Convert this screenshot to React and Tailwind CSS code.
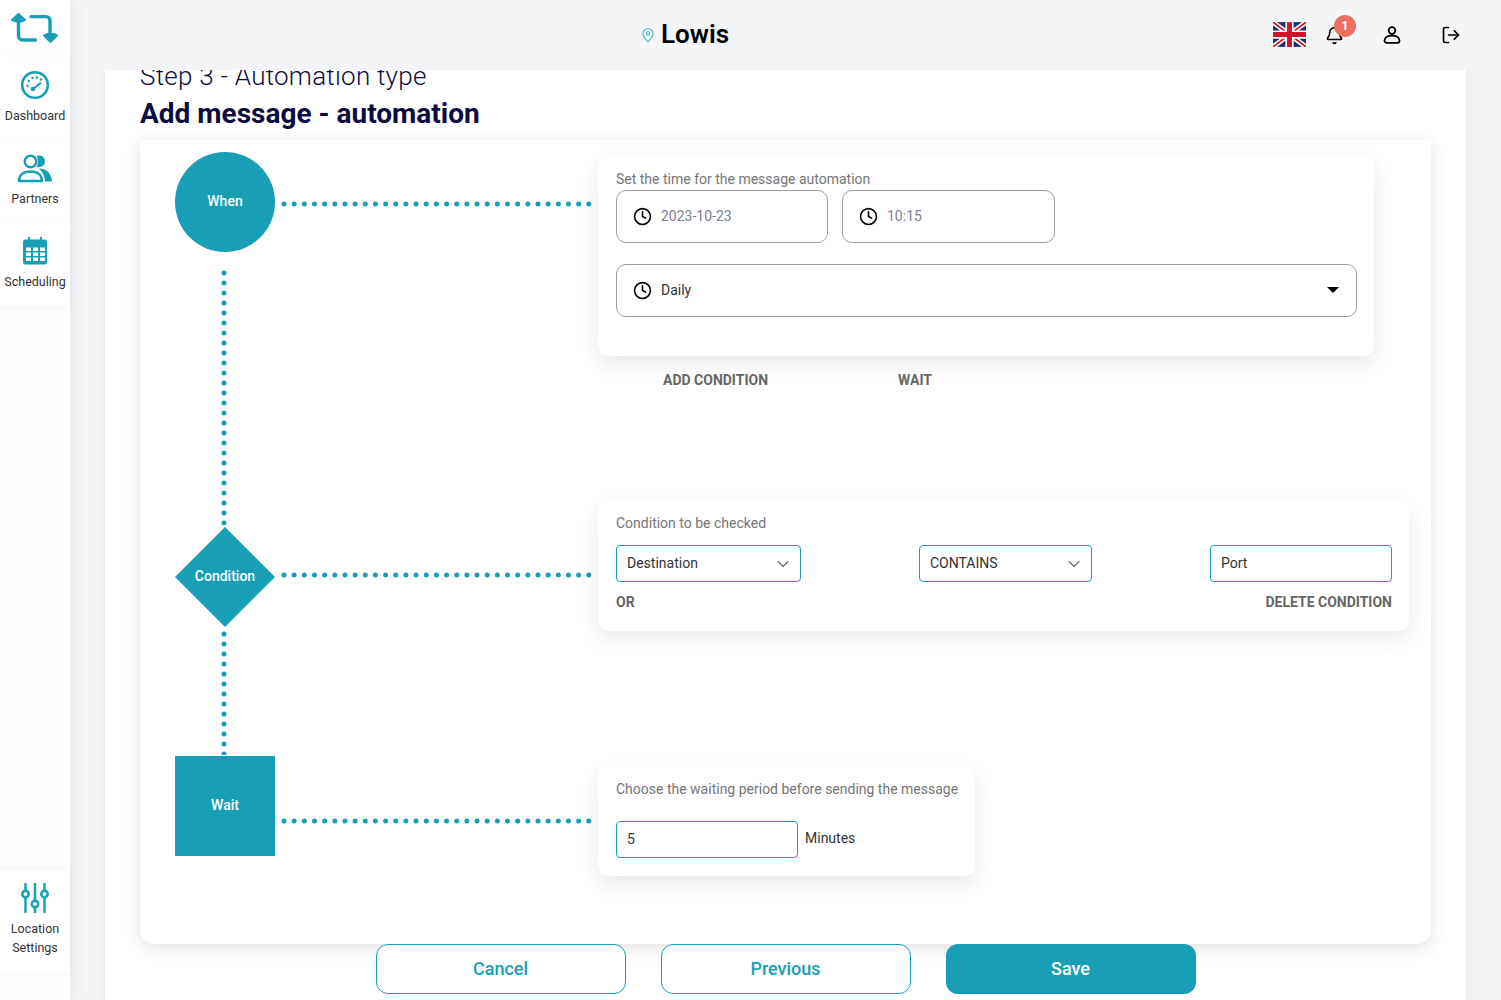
import React from "react";
import { Clock, ChevronDown, Bell, LogOut } from "lucide-react";

const TEAL = "#189fb6";

function Logo() {
  return (
    <svg width="48" height="31" viewBox="0 0 48 31" fill="none" stroke={TEAL} strokeWidth="3.4" strokeLinecap="round" strokeLinejoin="round">
      <path d="M7.5 9v14a4 4 0 0 0 4 4h13" />
      <path d="M1 7 7.500 1 14 7 10 8.500H5z" fill={TEAL} strokeWidth="2" />
      <path d="M20 3.6h15a4 4 0 0 1 4 4V21" />
      <path d="M33 22.500 39.500 29 46 22.500 42.500 21h-6z" fill={TEAL} strokeWidth="2" />
    </svg>
  );
}

function GaugeIcon() {
  return (
    <svg width="30" height="30" viewBox="0 0 30 30" fill="none">
      <circle cx="15" cy="15" r="12.800" stroke={TEAL} strokeWidth="2.600" />
      <circle cx="13" cy="19" r="2.300" fill={TEAL} />
      <path d="M13 19l7.500-6" stroke={TEAL} strokeWidth="2" strokeLinecap="round" />
      <g fill={TEAL}>
        <circle cx="7.500" cy="16" r="1.200" />
        <circle cx="9" cy="11" r="1.200" />
        <circle cx="12.500" cy="8" r="1.200" />
        <circle cx="17" cy="7.500" r="1.200" />
        <circle cx="21" cy="9.500" r="1.200" />
      </g>
    </svg>
  );
}

function PartnersIcon() {
  return (
    <svg width="36" height="30" viewBox="0 0 36 30" fill="none">
      <circle cx="13.500" cy="8.500" r="5.800" stroke={TEAL} strokeWidth="2.400" />
      <path d="M19.500 3c5-1.500 8.500 1.500 8.500 5.500S24 15 19.500 14c2-3.500 2-7.500 0-11z" fill={TEAL} />
      <path d="M2 28c0-6 4.500-9.500 11.500-9.500S25 22 25 28z" stroke={TEAL} strokeWidth="2.400" strokeLinejoin="round" />
      <path d="M22 15.500c7 0 12.500 4.500 13 13h-7c0-5-2-9-6-13z" fill={TEAL} />
    </svg>
  );
}

function CalendarIcon() {
  return (
    <svg width="26" height="30" viewBox="0 0 26 30" fill="none">
      <rect x="1" y="3.500" width="24" height="25" rx="2.500" fill={TEAL} />
      <rect x="6" y="1" width="2" height="5" fill={TEAL} />
      <rect x="18" y="1" width="2" height="5" fill={TEAL} />
      <g fill="#fff">
        {[4, 11, 18].map((x) =>
          [11.500, 16.500, 21.500].map((y) => <rect key={x + "-" + y} x={x} y={y} width="5" height="3.500" />)
        )}
      </g>
    </svg>
  );
}

function SlidersIcon() {
  return (
    <svg width="28" height="30" viewBox="0 0 28 30" fill="none" stroke={TEAL} strokeWidth="2.500">
      <path d="M4.500 1v7M4.500 14v15M14 1v17M14 24v5M23.500 1v7M23.500 14v15" strokeLinecap="round" />
      <circle cx="4.500" cy="11" r="3.200" />
      <circle cx="14" cy="21" r="3.200" />
      <circle cx="23.500" cy="11" r="3.200" />
    </svg>
  );
}

function PinIcon() {
  return (
    <svg width="12" height="15" viewBox="0 0 12 15" fill="none" stroke="#3eb3c6" strokeWidth="1.100">
      <path d="M6 14C3 10.500 1 8.300 1 5.700a5 5 0 0 1 10 0C11 8.300 9 10.500 6 14z" />
      <circle cx="6" cy="5.500" r="1.700" />
    </svg>
  );
}

function UserIcon() {
  return (
    <svg width="18" height="18" viewBox="0 0 18 18" fill="none" stroke="#000" strokeWidth="1.800" strokeLinejoin="round">
      <circle cx="9" cy="4.500" r="3.300" />
      <path d="M1.500 14.500c0-3 3-5 7.500-5s7.500 2 7.500 5c0 1.500-1 2.300-2 2.300h-11c-1 0-2-.8-2-2.300z" />
    </svg>
  );
}

function Flag() {
  return (
    <svg width="33" height="25" viewBox="0 0 60 45">
      <rect width="60" height="45" fill="#1c2f6e" />
      <path d="M0 0l60 45M60 0L0 45" stroke="#fff" strokeWidth="9" />
      <path d="M0 0l60 45M60 0L0 45" stroke="#cf142b" strokeWidth="3" />
      <path d="M30 0v45M0 22.500h60" stroke="#fff" strokeWidth="15" />
      <path d="M30 0v45M0 22.500h60" stroke="#cf142b" strokeWidth="9" />
    </svg>
  );
}

function DotsH() {
  return (
    <svg width="317" height="6" className="block shrink-0">
      <line x1="3" y1="3" x2="310" y2="3" stroke={TEAL} strokeWidth="5" strokeLinecap="round" strokeDasharray="0 10.16" />
    </svg>
  );
}

function DotsV({ height }) {
  return (
    <svg width="6" height={height} className="block">
      <line x1="3" y1="3" x2="3" y2={height} stroke={TEAL} strokeWidth="5" strokeLinecap="round" strokeDasharray="0 10" />
    </svg>
  );
}

function NavItem({ icon, children, className = "" }) {
  return (
    <div className={"flex flex-col items-center bg-white shadow-[0_0_10px_rgba(0,0,0,0.02)] text-[12.5px] leading-[19px] text-[#333] text-center " + className}>
      {icon}
      {children}
    </div>
  );
}

function TimeField({ className, text, muted }) {
  return (
    <div className={"flex h-[53px] items-center rounded-[10px] border border-[#9e9e9e] pl-4 text-sm " + className}>
      <Clock size={19} strokeWidth={2} className="text-black shrink-0" />
      <span className={"ml-[9px] pb-[2px] " + (muted ? "text-[#7b8090]" : "text-[#333]")}>{text}</span>
    </div>
  );
}

function Select({ className, text }) {
  return (
    <div className={"flex h-[37px] items-center justify-between rounded-[4px] border border-[#189fb6] pl-[10px] pr-[7px] text-sm text-[#333] " + className}>
      <span className="pb-[1px]">{text}</span>
      <ChevronDown size={20} strokeWidth={1.500} className="text-[#6b7280]" />
    </div>
  );
}

const cardCls = "rounded-[10px] bg-white shadow-[0_8px_20px_rgba(0,0,0,0.09)]";

export default function App() {
  return (
    <div className="flex h-[1000px] overflow-hidden bg-[#f4f5f7] font-['Roboto',sans-serif]">
      <aside className="z-20 flex w-[70px] shrink-0 flex-col justify-between bg-[#fcfcfc] pb-7 shadow-[4px_0_14px_rgba(60,70,110,0.07)]">
        <div>
          <div className="flex h-[57px] justify-center bg-white pt-[13px]">
            <Logo />
          </div>
          <NavItem className="h-[83px] pt-[13px]" icon={<GaugeIcon />}>
            <span className="mt-[6px]">Dashboard</span>
          </NavItem>
          <NavItem className="h-[83px] pt-[13px]" icon={<PartnersIcon />}>
            <span className="mt-[6px]">Partners</span>
          </NavItem>
          <NavItem className="h-[83px] pt-[13px]" icon={<CalendarIcon />}>
            <span className="mt-[6px]">Scheduling</span>
          </NavItem>
        </div>
        <NavItem className="h-[102px] pt-[13px]" icon={<SlidersIcon />}>
          <span className="mt-[6px]">Location<br />Settings</span>
        </NavItem>
      </aside>

      <main className="flex min-w-0 flex-1 flex-col">
        <header className="relative z-10 flex h-[70px] shrink-0 items-center bg-[#f4f5f7] pr-[40px]">
          <div className="ml-[572px] flex items-center">
            <PinIcon />
            <span className="ml-[7px] mb-[2px] text-[26px] font-semibold leading-none text-black">Lowis</span>
          </div>
          <div className="ml-auto flex items-center">
            <div className="mb-[2px]"><Flag /></div>
            <div className="relative ml-[19px]">
              <Bell size={19} strokeWidth={2} className="text-black" />
              <span className="absolute left-[9px] top-[-11px] flex h-[22px] w-[22px] items-center justify-center rounded-full bg-[#ee6f63] text-xs font-bold text-white">1</span>
            </div>
            <div className="ml-[39px]"><UserIcon /></div>
            <LogOut size={20} strokeWidth={2} className="ml-[40px] text-black" />
          </div>
        </header>

        <div className="min-h-0 flex-1 px-[35px]">
          <section className="h-[950px] bg-white px-[35px] shadow-[0_0_12px_rgba(60,70,110,0.05)]">
            <h2 className="mt-[-11px] text-[26px] font-light leading-[34px] tracking-[0.25px] text-[#0c0c40]">Step 3 - Automation type</h2>
            <h1 className="mt-[2px] text-[28px] font-bold leading-[37px] text-[#0c0c40]">Add message - automation</h1>

            <div className="mt-[8px] h-[804px] rounded-b-[14px] bg-white pl-[35px] pt-[12px] shadow-[0_4px_16px_rgba(0,0,0,0.12)]">
              <div className="flex h-[375px] items-start">
                <div className="flex w-[100px] shrink-0 flex-col items-center">
                  <div className="flex h-[100px] w-[100px] items-center justify-center rounded-full bg-[#189fb6] pb-[2px] text-sm font-medium text-white">When</div>
                  <div className="mt-[18px] pr-[2px]"><DotsV height={255} /></div>
                </div>
                <div className="ml-[6px] mt-[49px]"><DotsH /></div>
                <div className={"mt-[3px] h-[201px] w-[776px] px-[18px] pt-[15px] " + cardCls}>
                  <p className="text-sm leading-[18px] text-[#757575]">Set the time for the message automation</p>
                  <div className="mt-[2px] flex gap-[14px]">
                    <TimeField className="w-[212px]" text="2023-10-23" muted />
                    <TimeField className="w-[213px]" text="10:15" muted />
                  </div>
                  <div className="relative mt-[21px] w-[741px]">
                    <TimeField className="w-full" text="Daily" />
                    <span className="absolute right-[18px] top-[23px] h-0 w-0 border-x-[6px] border-t-[6px] border-x-transparent border-t-black" />
                  </div>
                  <div className="mt-[54px] flex text-sm font-bold leading-[18px] text-[#666]">
                    <span className="ml-[47px]">ADD CONDITION</span>
                    <span className="ml-[130px]">WAIT</span>
                  </div>
                </div>
              </div>

              <div className="flex h-[229px] items-start">
                <div className="flex w-[100px] shrink-0 flex-col items-center">
                  <div className="flex h-[100px] w-[100px] items-center justify-center bg-[#189fb6] pb-[2px] text-sm font-medium text-white [clip-path:polygon(50%_0,100%_50%,50%_100%,0_50%)]">Condition</div>
                  <div className="mt-[4px] pr-[2px]"><DotsV height={124} /></div>
                </div>
                <div className="ml-[6px] mt-[45px]"><DotsH /></div>
                <div className={"mt-[-27px] h-[131px] w-[811px] pl-[18px] pr-[17px] pt-[14px] " + cardCls}>
                  <p className="text-sm leading-[18px] text-[#757575]">Condition to be checked</p>
                  <div className="mt-[13px] flex">
                    <Select className="w-[185px]" text="Destination" />
                    <Select className="ml-[118px] w-[173px]" text="CONTAINS" />
                    <div className="ml-[118px] flex h-[37px] w-[182px] items-center rounded-[4px] border border-[#189fb6] pb-[1px] pl-[10px] text-sm text-[#333]">Port</div>
                  </div>
                  <div className="mt-[11px] flex justify-between text-sm font-bold leading-[18px] text-[#666]">
                    <span>OR</span>
                    <span>DELETE CONDITION</span>
                  </div>
                </div>
              </div>

              <div className="flex items-start">
                <div className="flex h-[100px] w-[100px] shrink-0 items-center justify-center bg-[#189fb6] pb-[2px] text-sm font-medium text-white">Wait</div>
                <div className="ml-[6px] mt-[62px]"><DotsH /></div>
                <div className={"mt-[9px] h-[111px] w-[377px] pl-[18px] pt-[15px] " + cardCls}>
                  <p className="text-sm leading-[18px] text-[#757575]">Choose the waiting period before sending the message</p>
                  <div className="mt-[23px] flex items-center">
                    <div className="flex h-[37px] w-[182px] items-center rounded-[4px] border border-[#189fb6] pb-[1px] pl-[10px] text-sm text-[#333]">5</div>
                    <span className="mb-[3px] ml-[7px] text-sm text-[#333]">Minutes</span>
                  </div>
                </div>
              </div>
            </div>

            <div className="flex justify-center gap-[35px]">
              <button className="h-[50px] w-[250px] rounded-[12px] border border-[#189fb6] bg-white text-lg font-medium text-[#189fb6]">Cancel</button>
              <button className="h-[50px] w-[250px] rounded-[12px] border border-[#189fb6] bg-white text-lg font-medium text-[#189fb6]">Previous</button>
              <button className="h-[50px] w-[250px] rounded-[12px] bg-[#189fb6] text-lg font-medium text-white">Save</button>
            </div>
          </section>
        </div>
      </main>
    </div>
  );
}
